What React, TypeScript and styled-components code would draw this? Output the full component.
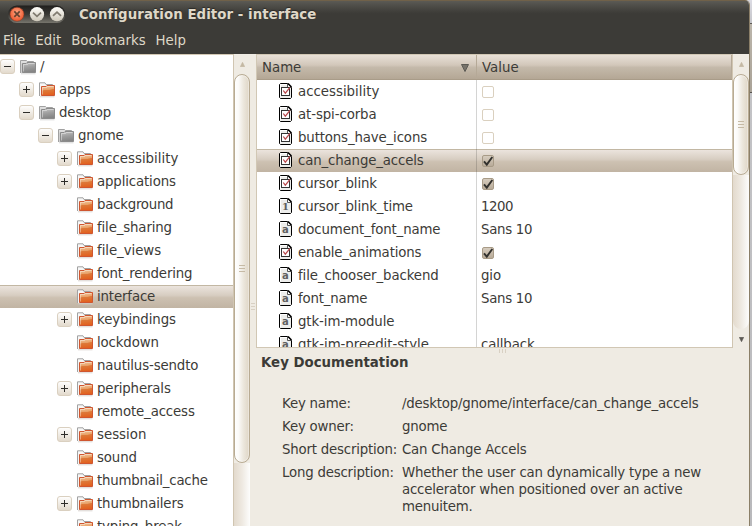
import React from "react";
import styled, { createGlobalStyle } from "styled-components";

const GlobalStyle = createGlobalStyle`
  * { box-sizing: border-box; }
  html, body { margin: 0; padding: 0; }
  body {
    width: 752px; height: 526px; overflow: hidden;
    font-family: "DejaVu Sans", sans-serif; font-size: 13.33px; color: #3c3b37;
  }
  svg { display: block; flex: none; }
`;

const Desktop = styled.div`
  display: flex;
  width: 752px;
  height: 526px;
  background: #d6d5da;
`;

const Window = styled.div`
  display: flex;
  flex-direction: column;
  width: 750px;
  height: 526px;
  border-right: 1px solid #8b7f68;
  border-top-right-radius: 5px;
  overflow: hidden;
  background: #efebe3;
`;

const Backdrop = styled.div`
  width: 2px;
  background: linear-gradient(#dcdce4 0, #c4c4c8 23px, #5d5a55 23px, #5d5a55 24px, #bbb5ab 24px, #aaa398 92px, #55524d 92px, #55524d 93px, #c3c3c6 93px, #b9b9bc);
`;

const Chrome = styled.header`
  height: 54px;
  flex: none;
  border-top: 1px solid #706149;
  background: linear-gradient(#5b5a54 0, #4b4a45 6px, #3d3c38 12px, #3c3b37 13px);
`;

const TitleBar = styled.div`
  display: flex;
  align-items: center;
  height: 26px;
  padding-left: 7px;
`;

const Title = styled.h1`
  margin: 2px 0 0 13px;
  font-size: 13.33px;
  line-height: 26px;
  font-weight: bold;
  letter-spacing: 0.06px;
  white-space: pre;
  color: #dfd8c8;
  text-shadow: 0 -1px 1px #2b2a27;
`;

const MenuBar = styled.nav`
  display: flex;
  gap: 10px;
  padding: 1px 0 0 3px;
  line-height: 25px;
  color: #dfd8c8;
`;

const Main = styled.main`
  display: flex;
  flex: 1;
  min-height: 0;
`;

const TreePane = styled.div`
  width: 233px;
  border-top: 1px solid #d3c8b4;
  background: #fff;
  overflow: hidden;
`;

const selection = `
  background: linear-gradient(#c2b7a3 0, #c2b7a3 1px, #ebe4dd 1px, #d7cdc1 45%, #cdc1b2 55%, #c1b4a3);
`;

const TreeRow = styled.div<{ $depth: number; $selected?: boolean }>`
  display: flex;
  align-items: center;
  height: 23px;
  padding-left: ${(p) => p.$depth * 19}px;
  line-height: 23px;
  white-space: nowrap;
  ${(p) => p.$selected && selection}
`;

const ExpanderSlot = styled.span`
  width: 20px;
  flex: none;
`;

const Label = styled.span<{ $tracking?: number }>`
  letter-spacing: ${(p) => p.$tracking ?? -0.14}px;
`;

const TreeLabel = styled(Label)`
  margin-left: 4px;
`;

const ScrollColumn = styled.div`
  display: flex;
  flex-direction: column;
  width: 17px;
  flex: none;
  border-left: 1px solid #d0c5b1;
`;

const ArrowCell = styled.div<{ $height: number; $top: number }>`
  flex: none;
  height: ${(p) => p.$height}px;
  padding: ${(p) => p.$top}px 0 0 6px;
`;

const Trough = styled.div<{ $rounded?: boolean }>`
  flex: 1;
  border-radius: ${(p) => (p.$rounded ? "0 0 8px 8px" : "0")};
  background: linear-gradient(90deg, #e3dacd, #eee9e1 50%, #fdfdfc);
`;

const Slider = styled.div<{ $height: number }>`
  display: flex;
  align-items: center;
  justify-content: center;
  height: ${(p) => p.$height}px;
  border: 1px solid #b8ab93;
  border-radius: 8px;
  background: linear-gradient(90deg, #fff, #fbfaf8 25%, #ece7dd 60%, #dfd6c6);
  box-shadow: inset 0 0 0 1px rgba(255, 255, 255, 0.35);
`;

const PaneGap = styled.div`
  display: flex;
  width: 6px;
  flex: none;
  padding: 249px 0 0 1px;
`;

const RightPane = styled.div`
  display: flex;
  flex-direction: column;
  flex: 1;
  min-width: 0;
`;

const ListArea = styled.div`
  display: flex;
  height: 294px;
  flex: none;
`;

const Table = styled.div`
  width: 476px;
  border: 1px solid #d1c7b4;
  border-right: 0;
  background: #fff;
  overflow: hidden;
`;

const HeaderRow = styled.div`
  display: flex;
  height: 25px;
  line-height: 24px;
  border-bottom: 1px solid #a99c89;
  background: linear-gradient(#e8e0d7, #d2c7ba 42%, #c4b9aa 52%, #b4a795);
`;

const HeaderCell = styled.div<{ $width?: number }>`
  display: flex;
  justify-content: space-between;
  align-items: center;
  width: ${(p) => (p.$width ? `${p.$width}px` : "auto")};
  flex: ${(p) => (p.$width ? "none" : "1")};
  padding: 1px 7px 0 5px;
  border-right: 1px solid #b5a997;
`;

const KeyRow = styled.div<{ $selected?: boolean }>`
  display: flex;
  height: 23px;
  line-height: 23px;
  ${(p) => p.$selected && selection}
`;

const NameCell = styled.div`
  display: flex;
  align-items: center;
  width: 220px;
  flex: none;
  padding-left: 22px;
  gap: 6px;
  border-right: 1px solid rgba(60, 59, 55, 0.22);
  svg { margin-bottom: 1px; }
`;

const ValueCell = styled.div`
  display: flex;
  align-items: center;
  padding-left: 4px;
`;

const CheckBox = styled.span<{ $on?: boolean }>`
  width: 12px;
  height: 12px;
  margin: 1px 0 0 1px;
  border: 1px solid ${(p) => (p.$on ? "#a89b87" : "#dad0bf")};
  border-radius: 2px;
  background: ${(p) => (p.$on ? "linear-gradient(#d6ccbe, #b8ab99)" : "#fff")};
  svg { margin: -1px; }
`;

const Docs = styled.section`
  position: relative;
  padding: 5px 0 0 5px;
`;

const SplitGrip = styled.div`
  position: absolute;
  left: 243px;
  top: 1px;
`;

const DocsTitle = styled.h2`
  margin: 0 0 23px;
  font-size: 13.33px;
  line-height: 19px;
`;

const DocsGrid = styled.dl`
  display: grid;
  grid-template-columns: 120px 320px;
  row-gap: 6px;
  margin: 0;
  padding-left: 21px;
  line-height: 17px;
  letter-spacing: -0.2px;
`;

const DocsText = styled.dd`
  margin: 0;
  white-space: pre;
`;

const WindowButtons = () => (
  <svg width="59" height="20" viewBox="0 0 59 20">
    <defs>
      <linearGradient id="pill" x1="0" y1="0" x2="0" y2="1">
        <stop offset="0" stopColor="#201f1d" />
        <stop offset="0.5" stopColor="#393834" />
        <stop offset="1" stopColor="#77756d" />
      </linearGradient>
      <linearGradient id="knob" x1="0" y1="0" x2="0" y2="1">
        <stop offset="0" stopColor="#fffefa" />
        <stop offset="1" stopColor="#cdc7b9" />
      </linearGradient>
      <radialGradient id="close" cx="0.5" cy="0.4">
        <stop offset="0" stopColor="#ffa987" />
        <stop offset="1" stopColor="#ef6239" />
      </radialGradient>
    </defs>
    <rect x="1" y="1.5" width="57.5" height="17.5" rx="8.75" fill="url(#pill)" />
    <circle cx="10" cy="10.2" r="7" fill="url(#close)" stroke="#7c3420" strokeWidth="0.6" />
    <circle cx="30" cy="10.2" r="7.1" fill="url(#knob)" />
    <circle cx="50" cy="10.2" r="7.1" fill="url(#knob)" />
    <path d="M7.3 7.4l5.4 5.4M12.7 7.4l-5.4 5.4" stroke="#65422f" strokeWidth="1.7" />
    <path d="M26 8.7l4 3.6 4-3.6M46 11.8l4-3.6 4 3.6" fill="none" stroke="#807b70" strokeWidth="1.8" />
  </svg>
);

const Expander = ({ open }: { open: boolean }) => (
  <svg width="15" height="15" viewBox="0 0 15 15">
    <defs>
      <linearGradient id="exp" x1="0" y1="0" x2="0" y2="1">
        <stop offset="0" stopColor="#fff" />
        <stop offset="1" stopColor="#e2d9cb" />
      </linearGradient>
    </defs>
    <rect x="0.5" y="0.5" width="14" height="14" rx="2.5" fill="url(#exp)" stroke="#dad0c0" />
    <path d={open ? "M4 7.5h7" : "M4 7.5h7M7.5 4v7"} stroke="#2e2d2a" />
  </svg>
);

const Folder = ({ gray }: { gray?: boolean }) => (
  <svg width="16" height="16" viewBox="0 0 16 16">
    <defs>
      <linearGradient id="fo" x1="0" y1="0" x2="0.15" y2="1">
        <stop offset="0" stopColor="#f3cfa6" />
        <stop offset="0.48" stopColor="#e89f66" />
        <stop offset="0.52" stopColor="#dd7a3a" />
        <stop offset="1" stopColor="#e2611f" />
      </linearGradient>
      <linearGradient id="fg" x1="0" y1="0" x2="0.2" y2="1">
        <stop offset="0" stopColor="#c8c8c8" />
        <stop offset="0.5" stopColor="#a0a0a0" />
        <stop offset="1" stopColor="#858585" />
      </linearGradient>
    </defs>
    <path
      d={gray ? "M0.5 14V1.5H6.5L7.5 2.5H13.5V5" : "M0.5 14V0.8H6L7 2.5H13.5V5"}
      fill={gray ? "#dedede" : "#f7f7f7"}
      stroke="#a1a1a1"
    />
    <path d="M1 5V14H3V3.5Z" fill={gray ? "#cfcfcf" : "#f4f4f4"} />
    <path d="M1 14.8H15.5" stroke={gray ? "#d2d2d2" : "#d5cfca"} strokeWidth="0.9" />
    <path
      d={gray ? "M2.5 13.5V4.5H6L7 3.5H15.5V13.5Z" : "M2.5 13.5V4.5H7L8 3.5H15.5V13.5Z"}
      fill={gray ? "url(#fg)" : "url(#fo)"}
      stroke={gray ? "#8b8b8b" : "#cf5630"}
    />
    <path d="M3.5 12.5V5.5H7.5L8.5 4.5H14.5" fill="none" stroke="#fff" strokeOpacity="0.4" />
  </svg>
);

const FileGlyph = styled.text`
  font: bold 10px "DejaVu Sans", sans-serif;
  fill: #606060;
`;
const FileDigit = styled(FileGlyph)`
  font-family: "DejaVu Serif", serif;
`;

const KeyIcon = ({ kind }: { kind: Kind }) => (
  <svg width="13" height="16" viewBox="0 0 13 16">
    <path d="M1.5 0.5H8.5L12.5 4.5V14.5L11.5 15.5H1.5L0.5 14.5V1.5Z" fill="#ededeb" stroke="#000" />
    <path d="M1.5 14V1.5H8" fill="none" stroke="#fff" />
    <path d="M8.5 1V4.5H12" fill="#fff" stroke="#555" />
    <path d="M9 0.5L12.5 4" stroke="#000" strokeWidth="1.5" />
    {kind === "bool" && (
      <>
        <rect x="2.5" y="4.5" width="8" height="8" fill="#fff" stroke="#333" />
        <path d="M4.3 7.5L6.3 10.2L11 4.3" fill="none" stroke="#b8474b" strokeWidth="1.2" />
      </>
    )}
    {kind === "int" && <FileDigit x="3" y="12">1</FileDigit>}
    {kind === "text" && <FileGlyph x="3" y="12">a</FileGlyph>}
  </svg>
);

const CheckMark = () => (
  <svg width="12" height="12" viewBox="0 0 12 12">
    <path d="M2 6.3L4.8 9.6L10.3 2" fill="none" stroke="#32312e" strokeWidth="1.9" />
  </svg>
);

const Grip = ({ vertical, faint }: { vertical?: boolean; faint?: boolean }) => (
  <svg width={vertical ? 8 : faint ? 4 : 6} height={vertical ? 4 : 7} viewBox={vertical ? "0 0 8 4" : faint ? "0 0 4 7" : "0 0 6 7"}>
    <path
      d={vertical ? "M0.5 0V4M3.5 0V4M6.5 0V4" : "M0 .5H6M0 3.5H6M0 6.5H6"}
      stroke={faint ? "#d8d0c3" : "#c6baa5"}
    />
  </svg>
);

const Triangle = ({ down, big }: { down?: boolean; big?: boolean }) => (
  <svg width={big ? 8 : 5} height={big ? 8 : 5} viewBox="0 0 8 8">
    <path
      d={down ? "M0.5 0.5H7.5L4 7.5Z" : "M0.5 7.5H7.5L4 0.5Z"}
      fill={big ? "#77736b" : down ? "#5b5954" : "#c4b8a3"}
      stroke={big ? "#5c5a54" : down ? "#5b5954" : "#c4b8a3"}
    />
  </svg>
);

type Kind = "bool" | "int" | "text";

interface Node {
  name: string;
  depth: number;
  state?: "open" | "closed";
  selected?: boolean;
  tracking?: number;
}

const nodes: Node[] = [
  { name: "/", depth: 0, state: "open" },
  { name: "apps", depth: 1, state: "closed" },
  { name: "desktop", depth: 1, state: "open" },
  { name: "gnome", depth: 2, state: "open" },
  { name: "accessibility", depth: 3, state: "closed", tracking: 0 },
  { name: "applications", depth: 3, state: "closed" },
  { name: "background", depth: 3, tracking: -0.25 },
  { name: "file_sharing", depth: 3 },
  { name: "file_views", depth: 3, tracking: -0.05 },
  { name: "font_rendering", depth: 3, tracking: -0.18 },
  { name: "interface", depth: 3, selected: true },
  { name: "keybindings", depth: 3, state: "closed", tracking: -0.1 },
  { name: "lockdown", depth: 3 },
  { name: "nautilus-sendto", depth: 3 },
  { name: "peripherals", depth: 3, state: "closed" },
  { name: "remote_access", depth: 3 },
  { name: "session", depth: 3, state: "closed", tracking: 0 },
  { name: "sound", depth: 3 },
  { name: "thumbnail_cache", depth: 3, tracking: -0.2 },
  { name: "thumbnailers", depth: 3, state: "closed" },
  { name: "typing_break", depth: 3 },
];

interface Key {
  name: string;
  kind: Kind;
  value: string | boolean;
  selected?: boolean;
  tracking?: number;
  valueTracking?: number;
}

const keys: Key[] = [
  { name: "accessibility", kind: "bool", value: false, tracking: 0 },
  { name: "at-spi-corba", kind: "bool", value: false, tracking: -0.1 },
  { name: "buttons_have_icons", kind: "bool", value: false },
  { name: "can_change_accels", kind: "bool", value: true, selected: true },
  { name: "cursor_blink", kind: "bool", value: true },
  { name: "cursor_blink_time", kind: "int", value: "1200", valueTracking: -0.45 },
  { name: "document_font_name", kind: "text", value: "Sans 10", valueTracking: -0.28 },
  { name: "enable_animations", kind: "bool", value: true },
  { name: "file_chooser_backend", kind: "text", value: "gio", tracking: -0.1 },
  { name: "font_name", kind: "text", value: "Sans 10", tracking: -0.2, valueTracking: -0.28 },
  { name: "gtk-im-module", kind: "text", value: "", tracking: -0.1 },
  { name: "gtk-im-preedit-style", kind: "text", value: "callback", tracking: -0.05 },
];

const docs = [
  ["Key name:", "/desktop/gnome/interface/can_change_accels"],
  ["Key owner:", "gnome"],
  ["Short description:", "Can Change Accels"],
  ["Long description:", "Whether the user can dynamically type a new\naccelerator when positioned over an active\nmenuitem."],
];

export default function App() {
  return (
    <Desktop>
      <GlobalStyle />
      <Window>
        <Chrome>
          <TitleBar>
            <WindowButtons />
            <Title>Configuration Editor - interface</Title>
          </TitleBar>
          <MenuBar>
            {["File", "Edit", "Bookmarks", "Help"].map((m) => (
              <span key={m}>{m}</span>
            ))}
          </MenuBar>
        </Chrome>
        <Main>
          <TreePane>
            {nodes.map((n) => (
              <TreeRow key={n.name} $depth={n.depth} $selected={n.selected}>
                <ExpanderSlot>{n.state && <Expander open={n.state === "open"} />}</ExpanderSlot>
                <Folder gray={n.state === "open"} />
                <TreeLabel $tracking={n.tracking}>{n.name}</TreeLabel>
              </TreeRow>
            ))}
          </TreePane>
          <ScrollColumn>
            <ArrowCell $height={20} $top={8}><Triangle /></ArrowCell>
            <Slider $height={389}><Grip /></Slider>
            <Trough />
          </ScrollColumn>
          <PaneGap><Grip faint /></PaneGap>
          <RightPane>
            <ListArea>
              <Table>
                <HeaderRow>
                  <HeaderCell $width={220}>Name<Triangle down big /></HeaderCell>
                  <HeaderCell>Value</HeaderCell>
                </HeaderRow>
                {keys.map((k) => (
                  <KeyRow key={k.name} $selected={k.selected}>
                    <NameCell>
                      <KeyIcon kind={k.kind} />
                      <Label $tracking={k.tracking}>{k.name}</Label>
                    </NameCell>
                    <ValueCell>
                      {typeof k.value === "boolean" ? (
                        <CheckBox $on={k.value}>{k.value && <CheckMark />}</CheckBox>
                      ) : (
                        <Label $tracking={k.valueTracking}>{k.value}</Label>
                      )}
                    </ValueCell>
                  </KeyRow>
                ))}
              </Table>
              <ScrollColumn>
                <ArrowCell $height={20} $top={8}><Triangle /></ArrowCell>
                <Slider $height={101}><Grip /></Slider>
                <Trough $rounded />
                <ArrowCell $height={19} $top={8}><Triangle down /></ArrowCell>
              </ScrollColumn>
            </ListArea>
            <Docs>
              <SplitGrip><Grip vertical faint /></SplitGrip>
              <DocsTitle>Key Documentation</DocsTitle>
              <DocsGrid>
                {docs.map(([label, text]) => (
                  <React.Fragment key={label}>
                    <dt>{label}</dt>
                    <DocsText>{text}</DocsText>
                  </React.Fragment>
                ))}
              </DocsGrid>
            </Docs>
          </RightPane>
        </Main>
      </Window>
      <Backdrop />
    </Desktop>
  );
}
